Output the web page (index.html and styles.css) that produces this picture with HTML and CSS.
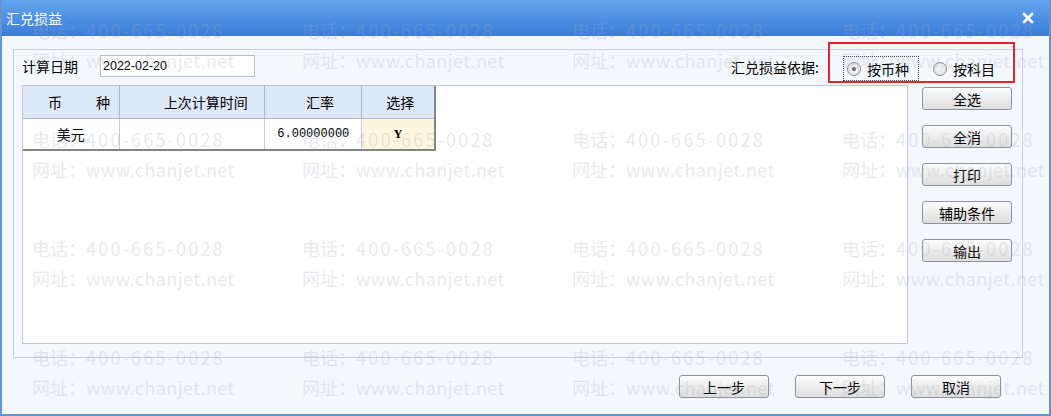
FILE: index.html
```html
<!DOCTYPE html>
<html>
<head>
    <title>汇兑损益</title>
    <link rel="stylesheet" href="styles.css">
</head>
<body>
    <div class="window">
        <div class="titlebar">
            <span class="title">汇兑损益</span>
            <svg class="close" width="12" height="12" viewBox="0 0 12 12">
                <path d="M2 2 L10 10 M10 2 L2 10" stroke="#fff" stroke-width="2.6" stroke-linecap="round"/>
            </svg>
        </div>

        <div class="content">
            <div class="group">
                <div class="toprow">
                    <span class="date-label">计算日期</span>
                    <div class="date-input">2022-02-20</div>
                    <div class="basis">
                        <span class="basis-label">汇兑损益依据:</span>
                        <span class="radio focused"><i class="dot on"></i>按币种</span>
                        <span class="radio"><i class="dot"></i>按科目</span>
                    </div>
                </div>

                <div class="main">
                    <div class="grid-panel">
                        <table class="grid">
                            <colgroup>
                                <col class="c1"><col class="c2"><col class="c3"><col class="c4">
                            </colgroup>
                            <tr class="head">
                                <th class="h1"><span class="gap">币</span>种</th>
                                <th class="h2">上次计算时间</th>
                                <th class="h3">汇率</th>
                                <th class="h4">选择</th>
                            </tr>
                            <tr class="row">
                                <td class="name">美元</td>
                                <td></td>
                                <td class="rate">6.00000000</td>
                                <td class="pick">Y</td>
                            </tr>
                        </table>
                    </div>
                    <div class="side-buttons">
                        <button class="btn">全选</button>
                        <button class="btn">全消</button>
                        <button class="btn">打印</button>
                        <button class="btn">辅助条件</button>
                        <button class="btn">输出</button>
                    </div>
                </div>
            </div>

            <div class="footer">
                <button class="btn">上一步</button>
                <button class="btn">下一步</button>
                <button class="btn">取消</button>
            </div>
        </div>

        <!-- red annotation box round the radio group -->
        <div class="highlight"></div>

        <div class="watermark">
            <div class="mark"><p class="tel">电话：<b>400-665-0028</b></p><p class="web">网址：<b>www.chanjet.net</b></p></div>
            <div class="mark"><p class="tel">电话：<b>400-665-0028</b></p><p class="web">网址：<b>www.chanjet.net</b></p></div>
            <div class="mark"><p class="tel">电话：<b>400-665-0028</b></p><p class="web">网址：<b>www.chanjet.net</b></p></div>
            <div class="mark"><p class="tel">电话：<b>400-665-0028</b></p><p class="web">网址：<b>www.chanjet.net</b></p></div>
            <div class="mark"><p class="tel">电话：<b>400-665-0028</b></p><p class="web">网址：<b>www.chanjet.net</b></p></div>
            <div class="mark"><p class="tel">电话：<b>400-665-0028</b></p><p class="web">网址：<b>www.chanjet.net</b></p></div>
            <div class="mark"><p class="tel">电话：<b>400-665-0028</b></p><p class="web">网址：<b>www.chanjet.net</b></p></div>
            <div class="mark"><p class="tel">电话：<b>400-665-0028</b></p><p class="web">网址：<b>www.chanjet.net</b></p></div>
            <div class="mark"><p class="tel">电话：<b>400-665-0028</b></p><p class="web">网址：<b>www.chanjet.net</b></p></div>
            <div class="mark"><p class="tel">电话：<b>400-665-0028</b></p><p class="web">网址：<b>www.chanjet.net</b></p></div>
            <div class="mark"><p class="tel">电话：<b>400-665-0028</b></p><p class="web">网址：<b>www.chanjet.net</b></p></div>
            <div class="mark"><p class="tel">电话：<b>400-665-0028</b></p><p class="web">网址：<b>www.chanjet.net</b></p></div>
            <div class="mark"><p class="tel">电话：<b>400-665-0028</b></p><p class="web">网址：<b>www.chanjet.net</b></p></div>
            <div class="mark"><p class="tel">电话：<b>400-665-0028</b></p><p class="web">网址：<b>www.chanjet.net</b></p></div>
            <div class="mark"><p class="tel">电话：<b>400-665-0028</b></p><p class="web">网址：<b>www.chanjet.net</b></p></div>
            <div class="mark"><p class="tel">电话：<b>400-665-0028</b></p><p class="web">网址：<b>www.chanjet.net</b></p></div>
        </div>
    </div>
</body>
</html>
```

FILE: styles.css
```css
body {
    margin: 0;
    font-family: "Noto Sans CJK SC", "Noto Sans", sans-serif;
    font-size: 14px;
    color: #000;
}
.window {
    position: relative;
    width: 1051px;
    height: 416px;
    box-sizing: border-box;
    border: 2px solid #6394d6;
    border-top: none;
    background: #f4f7fc;
    display: flex;
    flex-direction: column;
    overflow: hidden;
}
.titlebar {
    height: 36px;
    flex: none;
    display: flex;
    align-items: center;
    justify-content: space-between;
    padding: 0 15px 0 4px;
    background: linear-gradient(#64a5ee, #3a7cd8);
    color: #fff;
}
.title {
    font-size: 14px;
    line-height: 20px;
}
.content {
    flex: 1;
    padding: 13px 0 0 11px;
}
.group {
    width: 1010px;
    height: 309px;
    box-sizing: border-box;
    border: 1px solid #c4cedc;
    padding: 0 10px 13px 8px;
    display: flex;
    flex-direction: column;
}
.toprow {
    height: 35px;
    flex: none;
    display: flex;
    align-items: flex-start;
    padding-top: 5px;
    box-sizing: border-box;
}
.date-label {
    line-height: 22px;
}
.date-input {
    width: 155px;
    height: 22px;
    box-sizing: border-box;
    margin-left: 22px;
    border: 1px solid #b9bec6;
    background: #fff;
    font-family: "Liberation Sans", sans-serif;
    font-size: 12.5px;
    line-height: 20px;
    padding-left: 2px;
}
.basis {
    margin-left: auto;
    margin-right: 7px;
    display: flex;
    align-items: center;
    height: 25px;
    margin-top: 1px;
}
.basis-label {
    margin-right: 24px;
    line-height: 22px;
    margin-top: -3px;
}
.radio {
    display: flex;
    align-items: center;
    height: 25px;
    box-sizing: border-box;
    padding: 0 9px 0 3px;
    border: 1px dotted transparent;
    margin-right: 10px;
}
.radio:last-child {
    margin-right: 0;
}
.radio.focused {
    border-color: #444;
}
.dot {
    width: 14px;
    height: 14px;
    box-sizing: border-box;
    border: 1px solid #8d9094;
    border-radius: 50%;
    background: radial-gradient(circle, #eeeeee 40%, #d8d8d8 100%);
    margin-right: 6px;
    display: flex;
    align-items: center;
    justify-content: center;
}
.dot.on::after {
    content: "";
    width: 4px;
    height: 4px;
    border-radius: 50%;
    background: #666;
}
.main {
    flex: 1;
    display: flex;
    gap: 14px;
}
.grid-panel {
    flex: 1;
    border: 1px solid #c2c7cf;
    background: #fff;
}
.grid {
    border-collapse: collapse;
    table-layout: fixed;
    width: 413px;
    border-right: 2px solid #858585;
    border-bottom: 2px solid #858585;
}
.c1 { width: 96px; }
.c2 { width: 145px; }
.c3 { width: 97px; }
.c4 { width: 73px; }
.head th {
    height: 32px;
    padding: 0;
    background: #dce8f8;
    font-weight: normal;
    text-align: left;
    border-right: 1px solid #aab9cc;
    border-bottom: 1px solid #aab9cc;
    line-height: 20px;
}
.h1 { padding-left: 25px !important; }
.h2 { padding-left: 44px !important; }
.h3 { padding-left: 41px !important; }
.h4 { padding-left: 24px !important; }
.gap {
    margin-right: 34px;
}
.row td {
    height: 30px;
    padding: 0;
    border-right: 1px solid #c5ccd6;
    line-height: 20px;
}
.name {
    text-align: center;
}
.rate {
    text-align: right;
    padding-right: 12px !important;
    font-family: "Liberation Mono", monospace;
    font-size: 12px;
}
.pick {
    text-align: center;
    background: #fdf6df;
    font-family: "Liberation Serif", serif;
    font-weight: bold;
    font-size: 12px;
}
.side-buttons {
    width: 90px;
    padding-top: 2px;
    display: flex;
    flex-direction: column;
    gap: 15px;
}
.btn {
    width: 90px;
    height: 23px;
    padding: 0;
    border: 1px solid #8e939b;
    border-radius: 3px;
    background: linear-gradient(#fdfdfd, #ebebeb 55%, #dedede);
    font-family: "Noto Sans CJK SC", sans-serif;
    font-size: 14px;
    line-height: 20px;
    color: #000;
}
.footer {
    margin-top: 17px;
    width: 1010px;
    display: flex;
    justify-content: flex-end;
    gap: 26px;
    padding-right: 22px;
    box-sizing: border-box;
}
.highlight {
    position: absolute;
    left: 826px;
    top: 42px;
    width: 187px;
    height: 41px;
    box-sizing: border-box;
    border: 2px solid #e3262b;
}
.watermark {
    position: absolute;
    left: 30px;
    top: 15px;
    display: grid;
    grid-template-columns: repeat(4, 270px);
    grid-auto-rows: 109px;
    pointer-events: none;
    color: rgba(160, 170, 185, 0.26);
    font-size: 18px;
}
.mark p {
    margin: 0;
    line-height: 30px;
    white-space: nowrap;
}
.mark b {
    font-weight: normal;
}
.tel b {
    letter-spacing: 2.2px;
}
.web b {
    letter-spacing: 0.4px;
}
```
